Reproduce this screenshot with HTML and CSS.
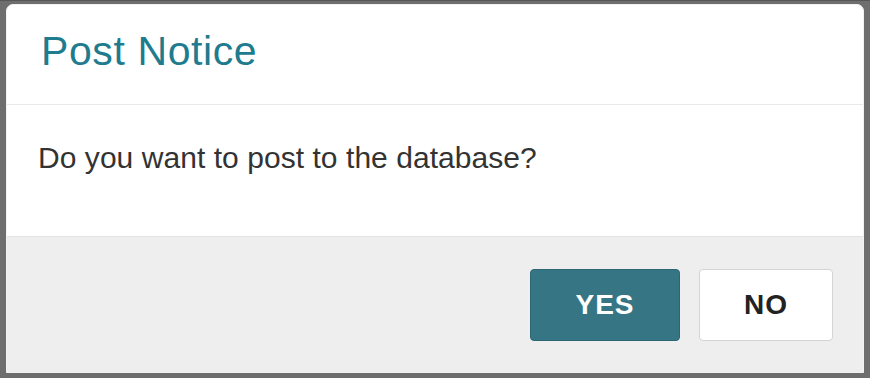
FILE: index.html
```html
<!DOCTYPE html>
<html lang="en">
<head>
<meta charset="utf-8">
<title>Post Notice</title>
<link rel="stylesheet" href="styles.css">
</head>
<body>
<div class="modal">
  <div class="modal-header">
    <h1 class="modal-title">Post Notice</h1>
  </div>
  <div class="modal-body">
    <p class="message">Do you want to post to the database?</p>
  </div>
  <div class="modal-footer">
    <button class="btn btn-primary">YES</button>
    <button class="btn btn-default">NO</button>
  </div>
</div>
</body>
</html>
```

FILE: styles.css
```css
html, body {
  margin: 0;
  padding: 0;
}
body {
  background: #6e6e6e;
  font-family: "Liberation Sans", Arial, sans-serif;
  padding: 3px 6px 5px 6px;
  height: 378px;
  box-sizing: border-box;
  border-top: 1px solid #565656;
}
.modal {
  height: 100%;
  background: #fff;
  border: 1px solid #f2f2f2;
  border-radius: 7px 7px 0 0;
  display: flex;
  flex-direction: column;
  overflow: hidden;
  box-sizing: border-box;
}
.modal-header {
  height: 100px;
  box-sizing: border-box;
  padding: 24px 33px 0 34px;
  border-bottom: 1px solid #e8e8e8;
}
.modal-title {
  margin: 0;
  font-weight: normal;
  font-size: 41px;
  letter-spacing: 0.6px;
  line-height: 44px;
  color: #1f7b8e;
}
.modal-body {
  height: 131px;
  box-sizing: border-box;
  padding: 32px 33px 0 31px;
}
.message {
  margin: 0;
  font-size: 30px;
  letter-spacing: 0.05px;
  line-height: 42px;
  color: #333;
}
.modal-footer {
  flex: 1;
  background: #eeeeee;
  border-top: 1px solid #e3e3e3;
  display: flex;
  justify-content: flex-end;
  align-items: flex-start;
  gap: 19px;
  padding: 32px 30px 0;
}
.btn {
  height: 72px;
  border-radius: 4px;
  font-family: "Liberation Sans", Arial, sans-serif;
  font-weight: bold;
  font-size: 28px;
  letter-spacing: 1px;
  cursor: pointer;
  padding: 0;
}
.btn-primary {
  width: 150px;
  background: #367584;
  border: 1px solid #2c6674;
  color: #fff;
}
.btn-default {
  width: 134px;
  background: #fff;
  border: 1px solid #d4d4d4;
  color: #222;
}
```
